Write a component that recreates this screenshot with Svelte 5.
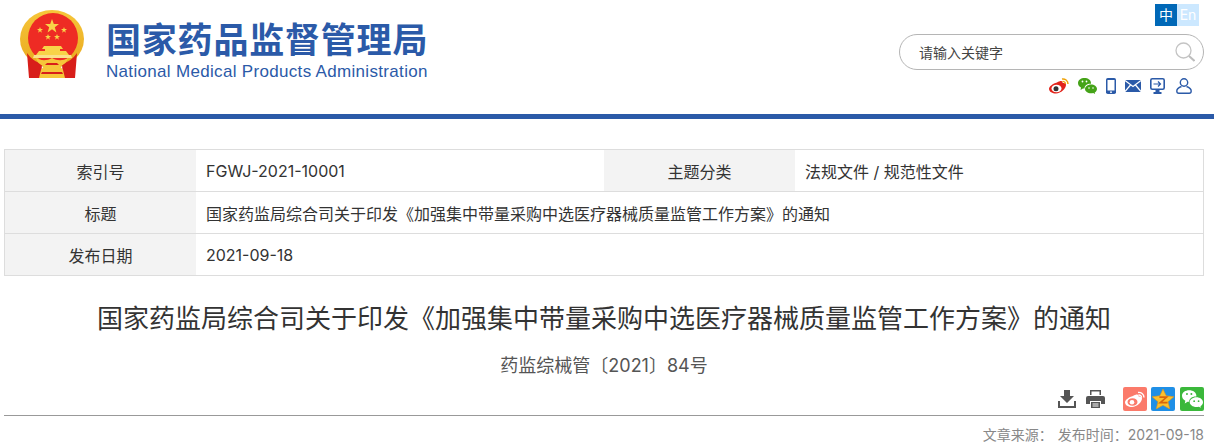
<script>
  const rows = [
    { label: '索引号', value: 'FGWJ-2021-10001', label2: '主题分类', value2: '法规文件 / 规范性文件' },
    { label: '标题', value: '国家药监局综合司关于印发《加强集中带量采购中选医疗器械质量监管工作方案》的通知' },
    { label: '发布日期', value: '2021-09-18' }
  ];
</script>

<div class="page">
  <header class="header">
    <div class="brand">
      <svg class="emblem" viewBox="0 0 64 70" aria-hidden="true">
        <defs>
          <linearGradient id="gold" x1="0" y1="0" x2="0" y2="1">
            <stop offset="0" stop-color="#f6c63a" />
            <stop offset="1" stop-color="#e9a91e" />
          </linearGradient>
        </defs>
        <ellipse cx="32" cy="29" rx="32" ry="29" fill="url(#gold)" />
        <ellipse cx="33" cy="28" rx="25" ry="25" fill="#ee2b24" />
        <path fill="#d81e1a" d="M7 43c4 6 9 9 15 11l-1 14H9z" />
        <path fill="#d81e1a" d="M57 43c-4 6-9 9-15 11l1 14h12z" />
        <polygon fill="#f8d348" points="32,9 33.800,14 39,14 34.800,17.200 36.400,22.500 32,19.300 27.600,22.500 29.200,17.200 25,14 30.200,14" />
        <polygon fill="#f8d348" points="20,17 20.800,19 23,19 21.200,20.400 21.900,22.700 20,21.300 18.100,22.700 18.800,20.400 17,19 19.200,19" />
        <polygon fill="#f8d348" points="44,17 44.800,19 47,19 45.200,20.400 45.900,22.700 44,21.300 42.100,22.700 42.800,20.400 41,19 43.200,19" />
        <polygon fill="#f8d348" points="28,24 28.800,26 31,26 29.200,27.400 29.900,29.700 28,28.300 26.100,29.700 26.800,27.400 25,26 27.200,26" />
        <polygon fill="#f8d348" points="37,24 37.800,26 40,26 38.200,27.400 38.900,29.700 37,28.300 35.100,29.700 35.800,27.400 34,26 36.200,26" />
        <path fill="#f8d348" d="M24 36h17l2 3h-3v2h6l3 4H16l3-4h6v-2h-3z" />
        <path fill="#fbe08a" d="M14 45h37l1 3H13z" />
        <path fill="#f6c63a" d="M16 48c5 3 11 3 16 0 5 3 11 3 16 0-1 4-4 7-8 8l3 4 2 8H19l2-8 3-4c-4-1-7-4-8-8z" />
        <path fill="#d81e1a" d="M27 53h10l2 2H25z" />
        <path fill="#d81e1a" d="M22 62h20l1 2H21z" />
      </svg>
      <div class="brand-text">
        <div class="brand-cn">国家药品监督管理局</div>
        <div class="brand-en">National Medical Products Administration</div>
      </div>
    </div>

    <div class="tools">
      <div class="lang">
        <span class="lang-cn">中</span>
        <span class="lang-en">En</span>
      </div>
      <div class="search">
        <span class="search-text">请输入关键字</span>
        <svg class="search-icon" viewBox="0 0 20 20" aria-hidden="true">
          <circle cx="8.500" cy="8.500" r="7.500" fill="none" stroke="#c4c4c4" stroke-width="1.300" />
          <path d="M14 14l5.500 5" stroke="#bdbdbd" stroke-width="2" fill="none" />
        </svg>
      </div>
      <div class="links">
        <svg width="20" height="16" viewBox="0 0 20 16" aria-hidden="true">
          <path fill="#e2231a" d="M8 4.500c2.500-1.700 5-2 5.500-.8.300.7 0 1.400 0 1.400 2-.6 3.500.1 3.500 1.700C17 10.500 12 15.500 7 15.500c-3.500 0-7-1.500-7-4.700C0 8.700 4 5.300 8 4.500z" />
          <ellipse cx="7.500" cy="10.500" rx="5" ry="3.800" fill="#fff" />
          <circle cx="7" cy="10.700" r="2.500" fill="#333" />
          <path d="M13 1c3-.5 6 1.500 6 5" stroke="#f0a30a" stroke-width="1.500" fill="none" />
          <path d="M13.500 3.500c1.500-.2 3 .8 3 2.500" stroke="#f0a30a" stroke-width="1.200" fill="none" />
        </svg>
        <svg width="19" height="16" viewBox="0 0 19 16" aria-hidden="true">
          <path fill="#45a318" d="M6.500 0C10 0 13 2 13 5c0 .3 0 .5-.1.800C9.500 5.500 6.500 7.500 6.500 10.500c-.6 0-1 0-1.500-.1L2.500 12l.5-2.500C1.200 8.500 0 7 0 5c0-3 3-5 6.500-5z" />
          <path fill="#45a318" d="M13 6.500c3.300 0 6 2 6 4.500 0 1.500-1 2.800-2.300 3.600l.4 1.400-1.900-1c-.7.200-1.400.300-2.200.300-3.300 0-6-2-6-4.300s2.700-4.500 6-4.500z" />
          <circle cx="4.500" cy="3.500" r=".9" fill="#fff" /><circle cx="8.500" cy="3.500" r=".9" fill="#fff" />
          <circle cx="11" cy="10" r=".8" fill="#fff" /><circle cx="15" cy="10" r=".8" fill="#fff" />
        </svg>
        <svg width="10" height="16" viewBox="0 0 10 16" aria-hidden="true">
          <rect x="0" y="0" width="10" height="16" rx="1.800" fill="#2b5aa8" />
          <rect x="1.500" y="2" width="7" height="10.500" fill="#fff" />
          <circle cx="5" cy="14.200" r=".9" fill="#fff" />
        </svg>
        <svg class="link-mail" width="16" height="12" viewBox="0 0 16 12" aria-hidden="true">
          <rect width="16" height="12" fill="#2b5aa8" />
          <path d="M0 .5l8 6 8-6M0 11.500l5.500-6.500M16 11.500L10.500 5" stroke="#fff" stroke-width="1.200" fill="none" />
        </svg>
        <svg width="15" height="16" viewBox="0 0 15 16" aria-hidden="true">
          <rect x=".8" y=".8" width="13.400" height="10.400" rx="1.500" fill="#fff" stroke="#2b5aa8" stroke-width="1.600" />
          <path d="M3.500 6h7M8 3.500L10.500 6 8 8.500" stroke="#2b5aa8" stroke-width="1.200" fill="none" />
          <path fill="#2b5aa8" d="M5.500 12h4v2h2v2h-8v-2h2z" />
        </svg>
        <svg class="link-user" width="16" height="16" viewBox="0 0 16 16" aria-hidden="true">
          <circle cx="8" cy="4.500" r="3.700" fill="none" stroke="#2b5aa8" stroke-width="1.400" />
          <path d="M5.500 8.500C2.500 9.500.8 11 .8 13c0 1.500.7 2.200 2 2.200h10.400c1.300 0 2-.7 2-2.200 0-2-1.700-3.500-4.700-4.500" fill="none" stroke="#2b5aa8" stroke-width="1.400" />
        </svg>
      </div>
    </div>
  </header>

  <div class="bar"></div>

  <div class="meta">
    {#each rows as row}
      <div class="meta-row">
        <div class="cell label">{row.label}</div>
        <div class="cell value">{row.value}</div>
        {#if row.label2}
          <div class="cell label label-2">{row.label2}</div>
          <div class="cell value value-2">{row.value2}</div>
        {/if}
      </div>
    {/each}
  </div>

  <h1 class="title">国家药监局综合司关于印发《加强集中带量采购中选医疗器械质量监管工作方案》的通知</h1>
  <p class="doc-no">药监综械管〔2021〕84号</p>

  <div class="actions">
    <svg width="18" height="18" viewBox="0 0 18 18" aria-hidden="true">
      <path fill="#555" d="M6 0h6v6h4l-7 7-7-7h4z" />
      <path d="M1 11v6h16v-6" stroke="#555" stroke-width="2" fill="none" />
    </svg>
    <svg class="act-print" width="19" height="18" viewBox="0 0 19 18" aria-hidden="true">
      <path fill="#555" d="M4 0h11v5H4z" />
      <path fill="#555" d="M2 6h15a2 2 0 0 1 2 2v6h-4v-3H4v3H0V8a2 2 0 0 1 2-2z" />
      <path fill="#555" d="M5 12h9v6H5z" />
      <path fill="#fff" d="M6.500 13.500h6v1h-6zM6.500 15.500h6v1h-6zM5.500 1.500h8V5h-8z" />
    </svg>
    <span class="tile tile-weibo">
      <svg width="20" height="17" viewBox="0 0 20 16" aria-hidden="true">
        <path fill="#fff" d="M8 4.500c2.500-1.700 5-2 5.500-.8.300.7 0 1.400 0 1.400 2-.6 3.500.1 3.500 1.700C17 10.500 12 15.500 7 15.500c-3.500 0-7-1.500-7-4.700C0 8.700 4 5.300 8 4.500z" />
        <ellipse cx="7.500" cy="10.500" rx="5" ry="3.800" fill="#fb7a6a" />
        <circle cx="7" cy="10.700" r="2.300" fill="#fff" />
        <path d="M13 1c3-.5 6 1.500 6 5M13.500 3.500c1.500-.2 3 .8 3 2.500" stroke="#fff" stroke-width="1.400" fill="none" />
      </svg>
    </span>
    <span class="tile tile-qzone">
      <svg width="22" height="20" viewBox="0 0 24 22" aria-hidden="true">
        <polygon fill="#fbc02d" stroke="#e8920f" stroke-width=".6" points="12,0 15.500,7.500 24,8.500 17.500,14 19.500,22 12,18 4.500,22 6.500,14 0,8.500 8.500,7.500" />
        <path d="M8 9h8l-7 6h8" stroke="#d9650b" stroke-width="1.800" fill="none" />
      </svg>
    </span>
    <span class="tile tile-wechat">
      <svg width="21" height="18" viewBox="0 0 19 16" aria-hidden="true">
        <path fill="#fff" d="M6.500 0C10 0 13 2 13 5c0 .3 0 .5-.1.800C9.500 5.500 6.500 7.500 6.500 10.500c-.6 0-1 0-1.500-.1L2.500 12l.5-2.500C1.200 8.500 0 7 0 5c0-3 3-5 6.500-5z" />
        <path fill="#fff" d="M13 6.500c3.300 0 6 2 6 4.500 0 1.500-1 2.800-2.300 3.600l.4 1.400-1.900-1c-.7.200-1.400.300-2.200.300-3.300 0-6-2-6-4.300s2.700-4.500 6-4.500z" />
        <circle cx="4.500" cy="3.500" r=".9" fill="#3bb83b" /><circle cx="8.500" cy="3.500" r=".9" fill="#3bb83b" />
        <circle cx="11" cy="10" r=".8" fill="#3bb83b" /><circle cx="15" cy="10" r=".8" fill="#3bb83b" />
      </svg>
    </span>
  </div>

  <div class="source">
    <span>文章来源：</span>
    <span>发布时间：2021-09-18</span>
  </div>
</div>

<style>
  :global(body) {
    background: #fff;
  }

  .page {
    width: 1214px;
    height: 446px;
    overflow: hidden;
    font-family: Inter, "Noto Sans CJK SC", "Liberation Sans", sans-serif;
    color: #333;
  }

  .header {
    height: 114px;
    display: flex;
    justify-content: space-between;
    box-sizing: border-box;
    padding: 4px 10px 0 20px;
  }

  .brand {
    display: flex;
    gap: 22px;
  }

  .emblem {
    width: 64px;
    height: 70px;
    margin-top: 6px;
  }

  .brand-text {
    margin-top: 12px;
    margin-left: 0;
    color: #2b5aa8;
  }

  .brand-cn {
    font-family: "Noto Sans CJK SC", sans-serif;
    font-size: 35px;
    font-weight: 700;
    line-height: 44px;
    letter-spacing: .8px;
    white-space: nowrap;
  }

  .brand-en {
    font-family: "Liberation Sans", sans-serif;
    font-size: 17px;
    line-height: 23px;
    letter-spacing: .32px;
    white-space: nowrap;
  }

  .tools {
    display: flex;
    flex-direction: column;
    align-items: flex-end;
  }

  .lang {
    display: flex;
    margin-right: 5px;
    font-size: 14px;
    line-height: 22px;
    text-align: center;
    color: #fff;
  }

  .lang-cn {
    width: 22px;
    background: #0068b7;
  }

  .lang-en {
    width: 22px;
    background: #cce8ff;
  }

  .search {
    width: 305px;
    height: 36px;
    box-sizing: border-box;
    margin-top: 8px;
    padding: 0 8px 0 19px;
    display: flex;
    align-items: center;
    justify-content: space-between;
    border: 1px solid #b5b5b5;
    border-radius: 18px;
    font-size: 14px;
    color: #444;
  }

  .search-icon {
    width: 20px;
    height: 20px;
  }

  .links {
    display: flex;
    align-items: center;
    gap: 9px;
    margin-top: 8px;
    padding-right: 12px;
  }

  .link-user {
    margin-left: 2px;
  }

  .bar {
    height: 5px;
    background: #2b5aa8;
  }

  .meta {
    width: 1200px;
    box-sizing: border-box;
    margin: 30px 0 0 4px;
    border: solid #ddd;
    border-width: 1px 1px 0;
    font-size: 16px;
    color: #333;
  }

  .meta-row {
    display: flex;
    height: 42px;
    box-sizing: border-box;
    border-bottom: 1px solid #ddd;
  }

  .cell {
    display: flex;
    align-items: center;
  }

  .label {
    width: 191px;
    justify-content: center;
    background: #f3f3f3;
  }

  .value {
    flex: 1;
    padding-left: 10px;
    white-space: nowrap;
  }

  .value-2 {
    flex: none;
    width: 408px;
    box-sizing: border-box;
  }

  .title {
    margin: 25px 6px 0 0;
    font-size: 26px;
    font-weight: 400;
    line-height: 36px;
    text-align: center;
    color: #333;
  }

  .doc-no {
    margin: 17px 6px 0 0;
    font-size: 18px;
    line-height: 24px;
    text-align: center;
    color: #555;
  }

  .actions {
    display: flex;
    align-items: center;
    justify-content: flex-end;
    margin-top: 9px;
    padding-right: 10px;
    height: 24px;
  }

  .act-print {
    margin: 0 18px 0 10px;
  }

  .tile {
    width: 24px;
    height: 24px;
    display: flex;
    align-items: center;
    justify-content: center;
    border-radius: 2px;
    margin-left: 5px;
  }

  .act-print + .tile {
    margin-left: 0;
  }

  .tile-weibo {
    background: #fb7a6a;
  }

  .tile-qzone {
    margin-left: 4px;
    background: #1f8fe6;
  }

  .tile-wechat {
    background: #3bb83b;
  }

  .source {
    margin: 4px 10px 0 4px;
    border-top: 1px solid #999;
    padding-top: 10px;
    display: flex;
    justify-content: flex-end;
    gap: 5px;
    font-size: 14px;
    line-height: 18px;
    color: #888;
  }
</style>
